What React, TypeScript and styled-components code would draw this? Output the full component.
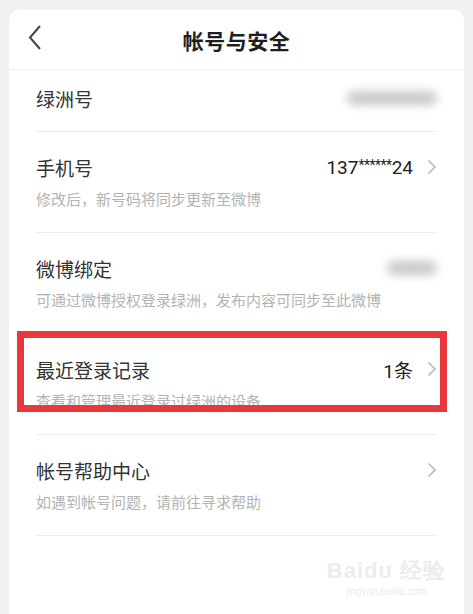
import * as React from 'react';
import styled, { createGlobalStyle } from 'styled-components';

const GlobalStyle = createGlobalStyle`
    html, body {
        margin: 0;
        padding: 0;
        background: #f1f1f1;
    }
    body {
        font-family: 'Noto Sans CJK SC', 'Noto Sans', sans-serif;
    }
`;

const Page = styled.div`
    width: 473px;
    height: 614px;
    padding: 10px 9px 0;
    box-sizing: border-box;
    overflow: hidden;
`;

const Card = styled.div`
    background: #fff;
    border-radius: 10px 10px 0 0;
    height: 604px;
    display: flex;
    flex-direction: column;
`;

const Header = styled.div`
    height: 60px;
    display: flex;
    align-items: center;
    justify-content: center;
    position: relative;
    border-bottom: 1px solid #f2f2f2;
    box-sizing: border-box;
`;

const BackButton = styled.span`
    position: absolute;
    left: 18px;
    top: 14px;
    display: flex;
`;

const Title = styled.h1`
    margin: 0;
    font-size: 21px;
    font-weight: 700;
    color: #1e1e1e;
    letter-spacing: 0.5px;
`;

const List = styled.div`
    padding: 0 27px;
    display: flex;
    flex-direction: column;
`;

const Row = styled.div<{ $single?: boolean; $highlight?: boolean }>`
    position: relative;
    display: flex;
    flex-direction: column;
    padding: ${p => (p.$single ? '17px 0 22px' : '24px 0 23px')};
    border-bottom: 1px solid #ededed;

    &::after {
        content: '';
        display: ${p => (p.$highlight ? 'block' : 'none')};
        position: absolute;
        top: -3px;
        left: -19px;
        right: -10px;
        height: 81px;
        box-sizing: border-box;
        border: 7px solid #e8383b;
        pointer-events: none;
    }
`;

const Line = styled.div`
    display: flex;
    align-items: center;
    height: 22px;
`;

const Label = styled.span`
    flex: 1;
    font-size: 19px;
    color: #333;
`;

const Value = styled.span`
    font-family: 'Roboto', 'Noto Sans CJK SC', sans-serif;
    font-size: 19px;
    color: #222;
`;

const Stars = styled.span`
    font-size: 14px;
    vertical-align: 4px;
    letter-spacing: -0.5px;
`;

const Chevron = styled.span`
    display: flex;
    margin-left: 14px;
`;

const Blurred = styled.span<{ $w: number }>`
    display: block;
    width: ${p => p.$w}px;
    height: 14px;
    border-radius: 7px;
    background: #c9c9c9;
    filter: blur(5px);
`;

const Hint = styled.div`
    margin-top: 11px;
    font-size: 15px;
    line-height: 20px;
    color: #b3b3b3;
`;

const Footer = styled.div`
    flex: 1;
    display: flex;
    justify-content: flex-end;
    align-items: flex-start;
    padding: 20px 18px 0 0;
`;

const Watermark = styled.div`
    display: flex;
    flex-direction: column;
    align-items: center;
    color: #ececec;
    font-family: 'Liberation Sans', sans-serif;
`;

const MarkTop = styled.span`
    font-size: 22px;
    font-weight: 700;
    letter-spacing: 1px;
`;

const MarkBottom = styled.span`
    font-size: 10px;
`;

const ChevronRight = () => (
    <svg width="10" height="16" viewBox="0 0 10 16">
        <path d="M1.5 1.5 L8 8 L1.5 14.5" fill="none" stroke="#b8b8b8" strokeWidth="1.6" />
    </svg>
);

const BackIcon = () => (
    <svg width="16" height="28" viewBox="0 0 16 28">
        <path d="M13 2 L3 13.5 L13 25" fill="none" stroke="#444" strokeWidth="2" />
    </svg>
);

const App = () => {
    return (
        <Page>
            <GlobalStyle />
            <Card>
                <Header>
                    <BackButton>
                        <BackIcon />
                    </BackButton>
                    <Title>帐号与安全</Title>
                </Header>
                <List>
                    <Row $single>
                        <Line>
                            <Label>绿洲号</Label>
                            <Blurred $w={90} />
                        </Line>
                    </Row>
                    <Row>
                        <Line>
                            <Label>手机号</Label>
                            <Value>
                                137<Stars>******</Stars>24
                            </Value>
                            <Chevron>
                                <ChevronRight />
                            </Chevron>
                        </Line>
                        <Hint>修改后，新号码将同步更新至微博</Hint>
                    </Row>
                    <Row>
                        <Line>
                            <Label>微博绑定</Label>
                            <Blurred $w={50} />
                        </Line>
                        <Hint>可通过微博授权登录绿洲，发布内容可同步至此微博</Hint>
                    </Row>
                    <Row $highlight>
                        <Line>
                            <Label>最近登录记录</Label>
                            <Value>1条</Value>
                            <Chevron>
                                <ChevronRight />
                            </Chevron>
                        </Line>
                        <Hint>查看和管理最近登录过绿洲的设备</Hint>
                    </Row>
                    <Row>
                        <Line>
                            <Label>帐号帮助中心</Label>
                            <Chevron>
                                <ChevronRight />
                            </Chevron>
                        </Line>
                        <Hint>如遇到帐号问题，请前往寻求帮助</Hint>
                    </Row>
                </List>
                <Footer>
                    <Watermark>
                        <MarkTop>Baidu 经验</MarkTop>
                        <MarkBottom>jingyan.baidu.com</MarkBottom>
                    </Watermark>
                </Footer>
            </Card>
        </Page>
    );
};

export default App;
